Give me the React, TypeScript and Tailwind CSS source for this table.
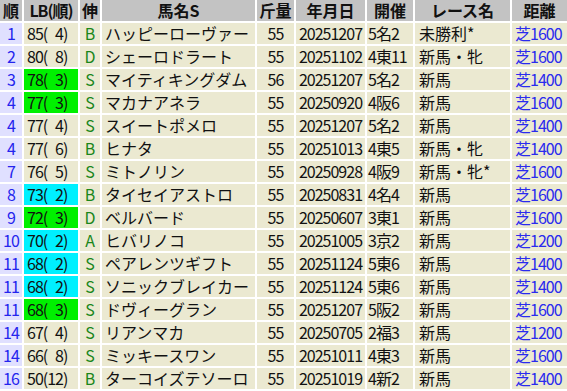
import React from 'react';

type Row = {
    rank: number;
    lb: number;
    lbRank: number;
    lbMark?: 'green' | 'cyan';
    nobi: string;
    name: string;
    kin: number;
    date: string;
    kaisai: string;
    race: string;
    dist: string;
};

const ROWS: Row[] = [
    { rank: 1, lb: 85, lbRank: 4, nobi: 'B', name: 'ハッピーローヴァー', kin: 55, date: '20251207', kaisai: '5名2', race: '未勝利*', dist: '芝1600' },
    { rank: 2, lb: 80, lbRank: 8, nobi: 'D', name: 'シェーロドラート', kin: 55, date: '20251102', kaisai: '4東11', race: '新馬・牝', dist: '芝1600' },
    { rank: 3, lb: 78, lbRank: 3, lbMark: 'green', nobi: 'S', name: 'マイティキングダム', kin: 56, date: '20251207', kaisai: '5名2', race: '新馬', dist: '芝1400' },
    { rank: 4, lb: 77, lbRank: 3, lbMark: 'green', nobi: 'S', name: 'マカナアネラ', kin: 55, date: '20250920', kaisai: '4阪6', race: '新馬', dist: '芝1600' },
    { rank: 4, lb: 77, lbRank: 4, nobi: 'S', name: 'スイートポメロ', kin: 55, date: '20251207', kaisai: '5名2', race: '新馬', dist: '芝1400' },
    { rank: 4, lb: 77, lbRank: 6, nobi: 'B', name: 'ヒナタ', kin: 55, date: '20251013', kaisai: '4東5', race: '新馬・牝', dist: '芝1400' },
    { rank: 7, lb: 76, lbRank: 5, nobi: 'S', name: 'ミトノリン', kin: 55, date: '20250928', kaisai: '4阪9', race: '新馬・牝*', dist: '芝1600' },
    { rank: 8, lb: 73, lbRank: 2, lbMark: 'cyan', nobi: 'B', name: 'タイセイアストロ', kin: 55, date: '20250831', kaisai: '4名4', race: '新馬', dist: '芝1600' },
    { rank: 9, lb: 72, lbRank: 3, lbMark: 'green', nobi: 'D', name: 'ベルバード', kin: 55, date: '20250607', kaisai: '3東1', race: '新馬', dist: '芝1600' },
    { rank: 10, lb: 70, lbRank: 2, lbMark: 'cyan', nobi: 'A', name: 'ヒバリノコ', kin: 55, date: '20251005', kaisai: '3京2', race: '新馬', dist: '芝1200' },
    { rank: 11, lb: 68, lbRank: 2, lbMark: 'cyan', nobi: 'S', name: 'ペアレンツギフト', kin: 55, date: '20251124', kaisai: '5東6', race: '新馬', dist: '芝1400' },
    { rank: 11, lb: 68, lbRank: 2, lbMark: 'cyan', nobi: 'S', name: 'ソニックブレイカー', kin: 55, date: '20251124', kaisai: '5東6', race: '新馬', dist: '芝1400' },
    { rank: 11, lb: 68, lbRank: 3, lbMark: 'green', nobi: 'S', name: 'ドヴィーグラン', kin: 55, date: '20251207', kaisai: '5阪2', race: '新馬', dist: '芝1600' },
    { rank: 14, lb: 67, lbRank: 4, nobi: 'S', name: 'リアンマカ', kin: 55, date: '20250705', kaisai: '2福3', race: '新馬', dist: '芝1200' },
    { rank: 14, lb: 66, lbRank: 8, nobi: 'S', name: 'ミッキースワン', kin: 55, date: '20251011', kaisai: '4東3', race: '新馬', dist: '芝1600' },
    { rank: 16, lb: 50, lbRank: 12, nobi: 'B', name: 'ターコイズテソーロ', kin: 55, date: '20251019', kaisai: '4新2', race: '新馬', dist: '芝1400' },
];

const HEADERS = ['順', 'LB(順)', '伸', '馬名S', '斤量', '年月日', '開催', 'レース名', '距離'];

// figure space keeps "( 4)" as wide as "(12)"
const lbText = (r: Row) => `${r.lb}(${String(r.lbRank).padStart(2, '\u2007')})`;

const cell = 'h-[21px] leading-[21px] whitespace-nowrap';
const num = 'tracking-[-1px]';
const beige = 'bg-[#ebe9d1]';

const App: React.FC = () => {
    return (
        <div
            className="w-[567px] h-[391px] bg-white text-[16px] text-[#111] overflow-hidden"
            style={{ fontFamily: '"Noto Sans CJK JP", "Noto Sans", sans-serif' }}
        >
            <div className="grid grid-cols-[22px_54px_20px_153px_37px_69px_46px_95px_55px] gap-[2px]">
                {HEADERS.map((h) => (
                    <div key={h} className={`${cell} bg-[#c3c3c3] text-center font-bold ${h === 'LB(順)' ? num : ''}`}>
                        {h}
                    </div>
                ))}

                {ROWS.map((r, i) => (
                    <React.Fragment key={i}>
                        <div className={`${cell} ${num} bg-[#e0e0ff] text-center text-[#2424ee]`}>{r.rank}</div>
                        <div
                            className={`${cell} ${num} pl-[3px] ${
                                r.lbMark === 'green' ? 'bg-[#00f000]' : r.lbMark === 'cyan' ? 'bg-[#00f0ff]' : beige
                            }`}
                        >
                            {lbText(r)}
                        </div>
                        <div className={`${cell} ${beige} text-center text-[#1a861a]`}>{r.nobi}</div>
                        <div className={`${cell} ${beige} pl-[3px]`}>{r.name}</div>
                        <div className={`${cell} ${num} ${beige} text-center`}>{r.kin}</div>
                        <div className={`${cell} ${num} ${beige} text-center`}>{r.date}</div>
                        <div className={`${cell} ${num} ${beige} pl-[1px]`}>{r.kaisai}</div>
                        <div className={`${cell} ${beige} pl-[4px]`}>{r.race}</div>
                        <div className={`${cell} ${num} ${beige} pl-[3px] text-[#2a2aee]`}>{r.dist}</div>
                    </React.Fragment>
                ))}
            </div>
        </div>
    );
};

export default App;
